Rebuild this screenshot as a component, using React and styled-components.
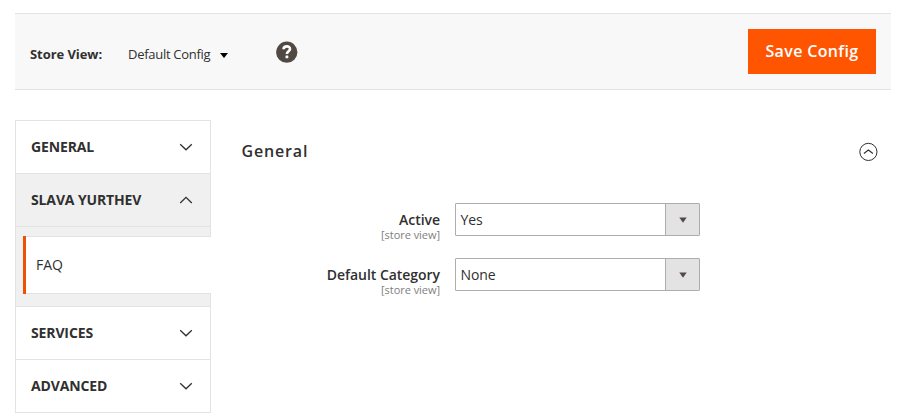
import React from "react";
import styled, { createGlobalStyle } from "styled-components";

const Global = createGlobalStyle`
  * { box-sizing: border-box; }
  body { margin: 0; background: #fff; color: #303030; font-family: "Open Sans", sans-serif; font-size: 14px; overflow: hidden; }
  button, h2 { margin: 0; font-family: inherit; }
`;

const Page = styled.div`
  width: 900px;
  height: 420px;
  padding: 13px 9px 0 15px;
`;

const Toolbar = styled.header`
  display: flex;
  align-items: center;
  height: 77px;
  padding: 0 15px;
  background: #f8f8f8;
  border-top: 1px solid #e3e3e3;
  border-bottom: 1px solid #e3e3e3;
`;

const ScopeLabel = styled.span`
  width: 98px;
  padding-top: 4px;
  font-size: 13px;
  font-weight: 700;
  line-height: 18px;
  white-space: nowrap;
  letter-spacing: -0.06px;
`;

const ScopeSwitch = styled.button`
  display: flex;
  align-items: center;
  gap: 10px;
  width: 148px;
  padding: 4px 0 0;
  border: 0;
  background: none;
  color: #303030;
  font-size: 13px;
  line-height: 18px;
  letter-spacing: -0.28px;
  white-space: nowrap;
  svg { margin-top: 3px; }
`;

const SaveButton = styled.button`
  width: 128px;
  height: 45px;
  margin-left: auto;
  padding: 0 0 1px;
  border: 0;
  background: #ff5501;
  color: #fff;
  font-size: 16px;
  font-weight: 600;
  letter-spacing: 0.36px;
  white-space: nowrap;
`;

const Columns = styled.div`
  display: flex;
  gap: 31px;
  padding-top: 30px;
`;

const Sidebar = styled.nav`
  width: 196px;
  height: 293px;
  flex: none;
  border: 1px solid #e3e3e3;
`;

const Section = styled.div`
  display: flex;
  align-items: center;
  justify-content: space-between;
  height: ${(p) => (p.$last ? 52 : 53)}px;
  padding: 0 17px 0 15px;
  border-bottom: ${(p) => (p.$last ? "0" : "1px solid #e3e3e3")};
  background: ${(p) => (p.$open ? "#f0f0f0" : "#fff")};
  font-weight: 700;
  font-size: 14px;
  letter-spacing: -0.13px;
  white-space: nowrap;
  span { padding-bottom: 1px; }
`;

const SubItems = styled.div`
  height: 80px;
  padding: 9px 0 12px 7px;
  background: #f0f0f0;
  border-bottom: 1px solid #e3e3e3;
`;

const SubItem = styled.div`
  display: flex;
  align-items: center;
  position: relative;
  height: 58px;
  margin-right: -1px;
  padding-left: 10px;
  background: #fff;
  border: solid #e3e3e3;
  border-width: 1px 0;
  &::before {
    content: "";
    position: absolute;
    left: 0;
    top: -1px;
    bottom: -1px;
    width: 3px;
    background: #eb5202;
  }
  span { padding: 0 0 2px 3px; letter-spacing: -0.1px; }
`;

const Content = styled.main`
  flex: 1;
`;

const Heading = styled.div`
  display: flex;
  align-items: center;
  justify-content: space-between;
  height: 62px;
  padding-right: 13px;
`;

const Title = styled.h2`
  margin-left: -0.5px;
  font-size: 16px;
  font-weight: 600;
  letter-spacing: 0.85px;
`;

const Form = styled.div`
  display: flex;
  flex-direction: column;
  gap: 22px;
  padding-top: 21px;
`;

const Field = styled.div`
  display: flex;
  gap: 15px;
  height: 33px;
`;

const Label = styled.div`
  width: 198px;
  padding-top: 7px;
  text-align: right;
  font-size: 14px;
  font-weight: 600;
  line-height: 19px;
  letter-spacing: -0.04px;
  white-space: nowrap;
`;

const Scope = styled.div`
  color: #808080;
  font-size: 11px;
  font-weight: 400;
  line-height: 12px;
`;

const Select = styled.div`
  display: flex;
  width: 245px;
  height: 33px;
  border: 1px solid #adadad;
  border-radius: 1px;
`;

const Value = styled.span`
  flex: 1;
  padding-left: 4.5px;
  line-height: 31px;
  letter-spacing: -0.1px;
`;

const Arrow = styled.span`
  display: flex;
  align-items: center;
  justify-content: center;
  width: 34px;
  background: #e3e3e3;
  border-left: 1px solid #adadad;
`;

const Chevron = ({ up }) => (
  <svg width="14" height="10" viewBox="0 0 14 10" fill="none" stroke="#303030" strokeWidth="1.3">
    <path d={up ? "M1.2 8 7 2.4 12.8 8" : "M1.2 2.2 7 7.8 12.8 2.2"} />
  </svg>
);

const HelpIcon = () => (
  <svg width="22" height="22" viewBox="0 0 22 22">
    <circle cx="10.8" cy="11.2" r="10.6" fill="#514943" />
    <path d="M7.5 8.3C7.7 4.3 14.2 4.5 14 8.1C13.9 10.4 10.9 10.3 10.9 13.1" fill="none" stroke="#fff" strokeWidth="2.6" />
    <rect x="9.5" y="14.6" width="2.8" height="2.7" rx=".4" fill="#fff" />
  </svg>
);

const CollapseIcon = () => (
  <svg width="20" height="20" viewBox="0 0 20 20" fill="none" stroke="#303030">
    <circle cx="10.4" cy="10.9" r="8.6" />
    <path d="M5.9 12.5 10.4 9 14.9 12.5" strokeWidth="1.1" />
  </svg>
);

const fields = [
  { label: "Active", value: "Yes" },
  { label: "Default Category", value: "None" },
];

export default function App() {
  return (
    <Page>
      <Global />
      <Toolbar>
        <ScopeLabel>Store View:</ScopeLabel>
        <ScopeSwitch>
          Default Config
          <svg width="8" height="5" viewBox="0 0 8 5"><path d="M0 0H8L4 5Z" fill="#000" /></svg>
        </ScopeSwitch>
        <HelpIcon />
        <SaveButton>Save Config</SaveButton>
      </Toolbar>
      <Columns>
        <Sidebar>
          <Section><span>GENERAL</span><Chevron /></Section>
          <Section $open><span>SLAVA YURTHEV</span><Chevron up /></Section>
          <SubItems>
            <SubItem><span>FAQ</span></SubItem>
          </SubItems>
          <Section><span>SERVICES</span><Chevron /></Section>
          <Section $last><span>ADVANCED</span><Chevron /></Section>
        </Sidebar>
        <Content>
          <Heading>
            <Title>General</Title>
            <CollapseIcon />
          </Heading>
          <Form>
            {fields.map((f) => (
              <Field key={f.label}>
                <Label>{f.label}<Scope>[store view]</Scope></Label>
                <Select>
                  <Value>{f.value}</Value>
                  <Arrow>
                    <svg width="8" height="6" viewBox="0 0 8 6"><path d="M.3 .5H7.7L4 5.7Z" fill="#514943" /></svg>
                  </Arrow>
                </Select>
              </Field>
            ))}
          </Form>
        </Content>
      </Columns>
    </Page>
  );
}
